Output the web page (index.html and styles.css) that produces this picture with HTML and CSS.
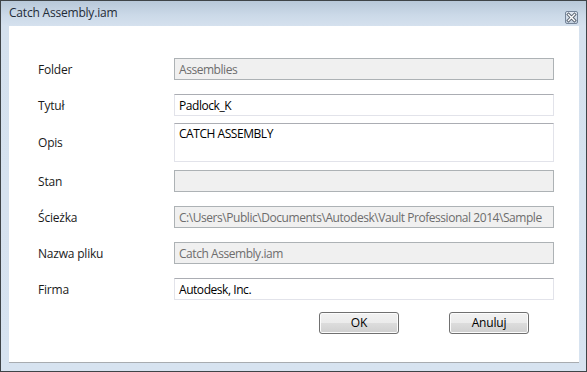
FILE: index.html
```html
<!DOCTYPE html>
<html>
<head>
<meta charset="utf-8">
<link rel="stylesheet" href="styles.css">
</head>
<body>
<div class="window">
  <div class="titlebar">
    <span class="title">Catch Assembly.iam</span>
    <span class="close">
      <svg width="13" height="13" viewBox="0 0 13 13">
        <path d="M3.5 3.5 L9.5 9.5 M9.5 3.5 L3.5 9.5" stroke="#5a6472" stroke-width="3.2" stroke-linecap="square"/>
        <path d="M3.5 3.5 L9.5 9.5 M9.5 3.5 L3.5 9.5" stroke="#ffffff" stroke-width="1.4" stroke-linecap="square"/>
      </svg>
    </span>
  </div>
  <div class="client">
    <div class="form">
      <div class="row">
        <div class="label">Folder</div>
        <div class="field disabled">Assemblies</div>
      </div>
      <div class="row">
        <div class="label">Tytuł</div>
        <div class="field">Padlock_K</div>
      </div>
      <div class="row row-tight">
        <div class="label">Opis</div>
        <div class="field multi">CATCH ASSEMBLY</div>
      </div>
      <div class="row row-opis-next">
        <div class="label">Stan</div>
        <div class="field disabled"></div>
      </div>
      <div class="row">
        <div class="label">Ścieżka</div>
        <div class="field disabled">C:\Users\Public\Documents\Autodesk\Vault Professional 2014\Sample</div>
      </div>
      <div class="row">
        <div class="label">Nazwa pliku</div>
        <div class="field disabled">Catch Assembly.iam</div>
      </div>
      <div class="row">
        <div class="label">Firma</div>
        <div class="field">Autodesk, Inc.</div>
      </div>
    </div>
    <div class="buttons">
      <button class="btn">OK</button>
      <button class="btn">Anuluj</button>
    </div>
  </div>
</div>
</body>
</html>
```
FILE: styles.css
```css
html, body {
  margin: 0;
  padding: 0;
  background: #ffffff;
}
.window {
  width: 587px;
  height: 372px;
  box-sizing: border-box;
  border: 1px solid #3f4448;
  background: linear-gradient(#b8c8d9 0px, #cbd9e8 14px, #d5e1ee 25px, #d7e3f0 100%);
  display: flex;
  flex-direction: column;
  font-family: "Open Sans", "Noto Sans", sans-serif;
}
.titlebar {
  height: 25px;
  flex: none;
  display: flex;
  align-items: center;
  justify-content: space-between;
  padding: 0 8px 0 8px;
}
.title {
  font-size: 12px;
  color: #1f2b38;
  margin-top: -2px;
  letter-spacing: -0.2px;
}
.close {
  width: 11px;
  height: 11px;
  border: 1px solid #75859a;
  border-radius: 2px;
  background: linear-gradient(#e3eaf3, #c3d0df);
  display: flex;
  align-items: center;
  justify-content: center;
  margin-top: 8px;
  overflow: hidden;
}
.close svg {
  flex: none;
}
.client {
  flex: 1;
  margin: 0 7px 8px 8px;
  background: #ffffff;
  border-bottom: 1px solid #a8acb0;
  display: flex;
  flex-direction: column;
  padding: 32px 25px 0 29px;
}
.form {
  display: flex;
  flex-direction: column;
}
.row {
  display: flex;
  align-items: center;
  margin-top: 14px;
}
.row:first-child {
  margin-top: 0;
}
.row-tight {
  margin-top: 7px;
}
.row-opis-next {
  margin-top: 8px;
}
.label {
  width: 136px;
  flex: none;
  font-size: 12px;
  color: #1a1a1a;
  letter-spacing: -0.2px;
}
.field {
  width: 380px;
  height: 22px;
  box-sizing: border-box;
  border: 1px solid #e2e3ea;
  border-top-color: #abadb3;
  background: #ffffff;
  font-size: 12px;
  color: #000000;
  padding: 2px 4px 0 4px;
  line-height: 17px;
  white-space: nowrap;
  overflow: hidden;
  letter-spacing: -0.45px;
}
.field.multi {
  height: 39px;
  padding-top: 1px;
}
.field.disabled {
  background: #f0f0f0;
  border-color: #adb2b5;
  color: #6d6d6d;
}
.buttons {
  display: flex;
  justify-content: flex-end;
  gap: 50px;
  margin-top: 12px;
  padding-right: 25px;
}
.btn {
  width: 80px;
  height: 22px;
  box-sizing: border-box;
  border: 1px solid #707070;
  border-radius: 3px;
  background: linear-gradient(#f2f2f2 0%, #ebebeb 50%, #dddddd 50%, #cfcfcf 100%);
  box-shadow: inset 0 0 0 1px #fcfcfc;
  font-family: "Open Sans", "Noto Sans", sans-serif;
  font-size: 12px;
  color: #000000;
  padding: 0;
  line-height: 18px;
  letter-spacing: -0.2px;
}
```
